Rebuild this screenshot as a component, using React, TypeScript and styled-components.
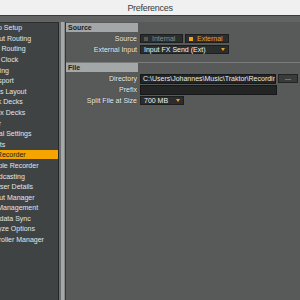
import React from 'react';
import styled, {createGlobalStyle} from "styled-components";

const GlobalStyle = createGlobalStyle`
    html, body {
      margin: 0;
      padding: 0;
      background: #5a5c5c;
      font-family: "Liberation Sans", Arial, sans-serif;
    }
`

const Window = styled.div`
    width: 300px;
    height: 300px;
    overflow: hidden;
    display: flex;
    flex-direction: column;
    background: #626464;
`
const TitleBar = styled.div`
    height: 15px;
    flex-shrink: 0;
    display: flex;
    align-items: center;
    justify-content: center;
    background: #f0f0f0;
    border-bottom: 1px solid #3a3c3c;
    color: #3c3c3c;
    font-size: 9px;
    letter-spacing: -0.3px;
`
const Body = styled.div`
    flex: 1;
    display: flex;
    padding-top: 6px;
    min-height: 0;
`
const Sidebar = styled.nav`
    width: 58px;
    flex-shrink: 0;
    overflow: hidden;
    background: #404343;
    border-top: 1px solid #2c2e2e;
    border-right: 1px solid #262828;
`
const NavList = styled.ul`
    list-style: none;
    margin: 0 0 0 -17px;
    padding: 0.2px 0 0;
    display: flex;
    flex-direction: column;
    gap: 1.6px;
`
const NavItem = styled.li<{ $active?: boolean }>`
    height: 9px;
    line-height: 9px;
    padding-left: 1px;
    white-space: nowrap;
    font-size: 7px;
    color: ${p => p.$active ? '#1a1a1a' : '#e4e4e4'};
    background: ${p => p.$active ? '#f5a400' : 'transparent'};
`
const ScrollTrack = styled.div`
    width: 7px;
    flex-shrink: 0;
    background: linear-gradient(to right, #6c6f6f 0 2px, #a6a9a9 2px 5px, #868989 5px 6px, #343636 6px 7px);
`
const Content = styled.main`
    flex: 1;
    background: #585a5a;
    display: flex;
    flex-direction: column;
`
const SectionHeader = styled.div<{ $gap?: number }>`
    margin-top: ${p => p.$gap ?? 0}px;
    border-top: 1px solid ${p => p.$gap ? '#7a7c7c' : '#585a5a'};
    height: 9px;
    display: flex;
`
const HeaderLabel = styled.div`
    width: 70px;
    padding-left: 2px;
    background: #a4a7a7;
    color: #1c1c1c;
    font-size: 7px;
    font-weight: bold;
    line-height: 9px;
`
const Rows = styled.div`
    display: flex;
    flex-direction: column;
    gap: 2px;
    padding-top: 2px;
`
const Row = styled.div`
    display: flex;
    align-items: center;
    gap: 3px;
    height: 9px;
`
const Label = styled.span`
    width: 71px;
    text-align: right;
    font-size: 7px;
    color: #f2f2f2;
    white-space: nowrap;
    text-shadow: 0 0 1px #222;
`
const Segment = styled.div`
    display: flex;
    gap: 2px;
`
const SegButton = styled.div<{ $on?: boolean; $w: number }>`
    width: ${p => p.$w}px;
    height: 9px;
    box-sizing: border-box;
    display: flex;
    align-items: center;
    gap: 4px;
    padding-left: 3px;
    background: #2c2e2e;
    border: 1px solid #1d1e1e;
    font-size: 7px;
    color: ${p => p.$on ? '#e4a032' : '#8a8c8c'};
    &::before {
      content: '';
      width: 4px;
      height: 4px;
      background: ${p => p.$on ? '#f2a21e' : '#555757'};
    }
`
const Dropdown = styled.div<{ $w: number }>`
    width: ${p => p.$w}px;
    height: 9px;
    box-sizing: border-box;
    display: flex;
    align-items: center;
    justify-content: space-between;
    padding: 0 3px 0 3px;
    background: #2c2e2e;
    border: 1px solid #1d1e1e;
    font-size: 7px;
    color: #f0f0f0;
    white-space: nowrap;
`
const Arrow = styled.span`
    width: 0;
    height: 0;
    border-left: 2.5px solid transparent;
    border-right: 2.5px solid transparent;
    border-top: 3px solid #f0a020;
`
const Field = styled.div<{ $w: number }>`
    width: ${p => p.$w}px;
    height: 10px;
    box-sizing: border-box;
    padding-left: 2px;
    background: #232525;
    border: 1px solid #161717;
    font-size: 7px;
    line-height: 8px;
    color: #ececec;
    white-space: nowrap;
    overflow: hidden;
`
const SmallButton = styled.div`
    width: 20px;
    height: 9px;
    box-sizing: border-box;
    margin-left: -1px;
    background: #3a3c3c;
    border: 1px solid #222424;
    color: #e0e0e0;
    font-size: 7px;
    line-height: 5px;
    text-align: center;
`

const items = [
    'Audio Setup', 'Output Routing', 'Input Routing', 'MIDI Clock', 'Loading',
    'Transport', 'Decks Layout', 'Track Decks', 'Remix Decks', 'Mixer',
    'Global Settings', 'Effects', 'Mix Recorder', 'Sample Recorder', 'Broadcasting',
    'Browser Details', 'Layout Manager', 'File Management', 'Metadata Sync',
    'Analyze Options', 'Controller Manager',
];

const App = () => {
    return (
        <>
            <GlobalStyle/>
            <Window>
                <TitleBar>Preferences</TitleBar>
                <Body>
                    <Sidebar>
                        <NavList>
                            {items.map(name => (
                                <NavItem key={name} $active={name === 'Mix Recorder'}>{name}</NavItem>
                            ))}
                        </NavList>
                    </Sidebar>
                    <ScrollTrack/>
                    <Content>
                        <SectionHeader><HeaderLabel>Source</HeaderLabel></SectionHeader>
                        <Rows>
                            <Row>
                                <Label>Source</Label>
                                <Segment>
                                    <SegButton $w={43}>Internal</SegButton>
                                    <SegButton $w={44} $on>External</SegButton>
                                </Segment>
                            </Row>
                            <Row>
                                <Label>External Input</Label>
                                <Dropdown $w={89}>Input FX Send (Ext)<Arrow/></Dropdown>
                            </Row>
                        </Rows>
                        <SectionHeader $gap={8}><HeaderLabel>File</HeaderLabel></SectionHeader>
                        <Rows>
                            <Row>
                                <Label>Directory</Label>
                                <Field $w={136}>C:\Users\Johannes\Music\Traktor\Recordings</Field>
                                <SmallButton>...</SmallButton>
                            </Row>
                            <Row>
                                <Label>Prefix</Label>
                                <Field $w={137}/>
                            </Row>
                            <Row>
                                <Label>Split File at Size</Label>
                                <Dropdown $w={44}>700 MB<Arrow/></Dropdown>
                            </Row>
                        </Rows>
                    </Content>
                </Body>
            </Window>
        </>
    );
};

export default App;
